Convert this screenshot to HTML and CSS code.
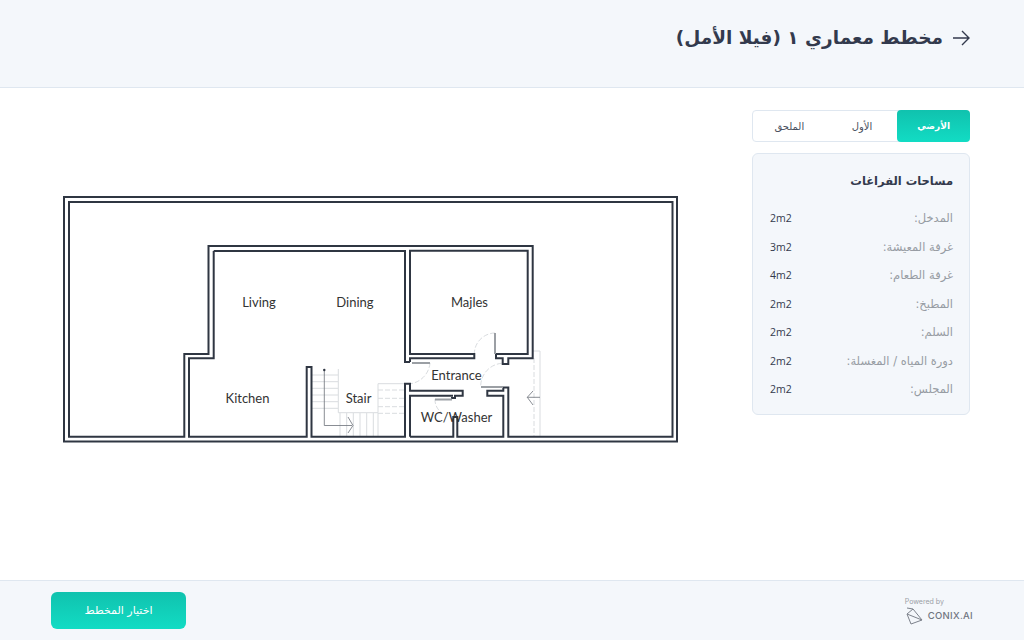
FILE: index.html
```html
<!DOCTYPE html>
<html lang="ar" dir="rtl">
<head>
    <meta charset="UTF-8">
    <title>مخطط معماري ١ (فيلا الأمل)</title>
    <link rel="stylesheet" href="styles.css">
</head>
<body>
    <header class="top-bar">
        <svg class="back-icon" viewBox="0 0 18 16" width="18" height="16" aria-hidden="true">
            <path d="M1 8H17M10 1L17 8L10 15"/>
        </svg>
        <h1>مخطط معماري ١ (فيلا الأمل)</h1>
    </header>

    <main class="content">
        <aside class="side">
            <div class="tabs">
                <button class="tab active">الأرضي</button>
                <button class="tab">الأول</button>
                <button class="tab">الملحق</button>
            </div>
            <section class="areas">
                <h2>مساحات الفراغات</h2>
                <div class="area-row"><span>المدخل:</span><b>2m2</b></div>
                <div class="area-row"><span>غرفة المعيشة:</span><b>3m2</b></div>
                <div class="area-row"><span>غرفة الطعام:</span><b>4m2</b></div>
                <div class="area-row"><span>المطبخ:</span><b>2m2</b></div>
                <div class="area-row"><span>السلم:</span><b>2m2</b></div>
                <div class="area-row"><span>دورة المياه / المغسلة:</span><b>2m2</b></div>
                <div class="area-row"><span>المجلس:</span><b>2m2</b></div>
            </section>
        </aside>

        <svg class="plan" viewBox="60 190 625 260" width="625" height="260" direction="ltr">
            <!-- stairs and ramp, light lines under the walls -->
            <g class="faint">
                <path d="M338.3 369V412.7H378V383.7H405"/>
                <path d="M312 375H338M312 381.7H338M312 388.3H338M312 395H338M312 401.7H338M312 408.3H338"/>
                <path d="M340 413V437M346.7 413V437M353.3 413V437M360 413V437M366.7 413V437M373.3 413V437M378 413V437"/>
                <path d="M532.7 351H540V437"/>
            </g>
            <g class="faint dashed">
                <path d="M378 390H405M378 398.3H405M378 406.7H405M378 413.3H405"/>
                <path d="M534 358V437"/>
                <path d="M495 333A21 21 0 0 0 474.3 354"/>
                <path d="M430 363A23 23 0 0 1 407 384"/>
                <path d="M501.7 363.3A23 23 0 0 0 480.7 386.7"/>
                <path d="M435 399A16 16 0 0 0 442 413"/>
            </g>
            <g class="thin">
                <path d="M324.3 370V425.5H352M348 417L353 425.5L348 433"/>
                <path d="M540 397.3H527.3M533 391L527.3 397.3L533 405"/>
            </g>
            <circle class="dot" cx="324.3" cy="370" r="1.2"/>

            <!-- walls -->
            <g class="wall">
                <rect x="64" y="197" width="613" height="244.5"/>
                <path d="M496 354V358.3H502.7V364H508.3V358.3H532.7V246H208.5V354H184.3V436.7H69V202H672.5V436.7H508.3V387.5H503"/>
                <path d="M410 362V358.3H474.3V354H410V250.7H527.7V354H496"/>
                <path d="M213.7 251H405V362H410M213.7 251V358.3H189V436.7H306.7V367H311.5V436.7H405V383.7H410V390.7H462.7V395.7H455V398H451"/>
                <path d="M410 436.7V395.7H453M410 436.7H453.3V417H457.3V436.7H503.3V395.7H487.3V390.7H503.3V387.5"/>
            </g>

            <!-- door leaves -->
            <g class="leaf">
                <path d="M495 333V354"/>
                <path d="M412 363H430"/>
                <path d="M481 387H503"/>
                <path d="M435 399.5H452"/>
            </g>

            <g class="labels">
                <text x="259" y="307">Living</text>
                <text x="355" y="307">Dining</text>
                <text x="469.5" y="307">Majles</text>
                <text x="456.5" y="380">Entrance</text>
                <text x="247.5" y="403">Kitchen</text>
                <text x="358.5" y="403">Stair</text>
                <text x="456.5" y="422">WC/Washer</text>
            </g>
        </svg>
    </main>

    <footer class="bottom-bar">
        <div class="powered" dir="ltr">
            <small>Powered by</small>
            <div class="brand">
                <svg viewBox="0 0 18 18" width="18" height="18" aria-hidden="true">
                    <path d="M2 1L8 2L17 13L6 17L2 7L8 2M2 7L17 13"/>
                </svg>
                <span>CONIX.AI</span>
            </div>
        </div>
        <button class="choose">اختيار المخطط</button>
    </footer>
</body>
</html>
```

FILE: styles.css
```css
* {
    box-sizing: border-box;
}
html, body {
    margin: 0;
    height: 100%;
}
body {
    display: flex;
    flex-direction: column;
    height: 640px;
    overflow: hidden;
    font-family: "DejaVu Sans", "Noto Sans", sans-serif;
    color: #333a4d;
    background: #fff;
}
.top-bar {
    display: flex;
    align-items: center;
    gap: 9px;
    height: 88px;
    padding: 0 54px 12px;
    background: #f4f7fb;
    border-bottom: 1px solid #dfe7f0;
}
.top-bar h1 {
    margin: 0;
    font-size: 18.5px;
    font-weight: 700;
    color: #333a4d;
}
.back-icon path {
    fill: none;
    stroke: #333a4d;
    stroke-width: 1.4;
}
.content {
    flex: 1;
    display: flex;
    justify-content: space-between;
    padding: 22px 54px 0 60px;
}
.side {
    width: 218px;
}
.tabs {
    display: flex;
    height: 32px;
    background: #fff;
    border: 1px solid #dfe7f0;
    border-radius: 4px;
}
.tab {
    flex: 1;
    padding: 0;
    border: none;
    background: none;
    font-family: inherit;
    font-size: 10px;
    color: #4a5160;
}
.tab.active {
    margin: -1px;
    font-size: 9px;
    font-weight: 700;
    color: #fff;
    border-radius: 4px;
    background: linear-gradient(180deg, #10c2ae, #12dcc4);
}
.areas {
    height: 262px;
    margin-top: 11px;
    padding: 19px 16px 0;
    background: #f4f7fb;
    border: 1px solid #dfe7f0;
    border-radius: 6px;
}
.areas h2 {
    margin: 0 0 14px;
    font-size: 11.5px;
    font-weight: 700;
    line-height: 17px;
    color: #333a4d;
}
.area-row {
    display: flex;
    justify-content: space-between;
    align-items: center;
    height: 28.5px;
    font-size: 11.5px;
    color: #979ca3;
}
.area-row b {
    margin-left: 1px;
    font-family: "Open Sans", sans-serif;
    font-weight: 400;
    font-size: 10.5px;
    color: #333a4d;
}
.plan {
    flex: none;
    margin-top: 80px;
}
.wall path, .wall rect {
    fill: none;
    stroke: #2f3642;
    stroke-width: 2;
}
.faint path {
    fill: none;
    stroke: #d9dcdf;
    stroke-width: 1;
}
.dashed path {
    stroke-dasharray: 5 2;
}
.thin path {
    fill: none;
    stroke: #6b7078;
    stroke-width: 0.8;
}
.dot {
    fill: #2f3642;
}
.leaf path {
    fill: none;
    stroke: #9b9fa4;
    stroke-width: 2;
}
.labels text {
    font-family: Lato, sans-serif;
    font-size: 13px;
    fill: #333;
    text-anchor: middle;
}
.bottom-bar {
    display: flex;
    justify-content: space-between;
    align-items: center;
    height: 60px;
    padding: 0 51px;
    background: #f4f7fb;
    border-top: 1px solid #dfe7f0;
}
.powered small {
    display: block;
    font-family: Inter, sans-serif;
    font-size: 7px;
    line-height: 9px;
    color: #9a9ea6;
}
.brand {
    display: flex;
    align-items: center;
    gap: 5px;
    margin-top: 1px;
}
.brand svg path {
    fill: none;
    stroke: #7d828c;
    stroke-width: 1;
}
.brand span {
    font-family: Inter, sans-serif;
    font-size: 9.5px;
    font-weight: 500;
    letter-spacing: 0.3px;
    color: #6f7480;
}
.choose {
    width: 135px;
    height: 37px;
    padding: 0;
    border: none;
    border-radius: 6px;
    font-family: inherit;
    font-size: 11px;
    color: #fff;
    background: linear-gradient(180deg, #10c2ae, #12dcc4);
}
```
